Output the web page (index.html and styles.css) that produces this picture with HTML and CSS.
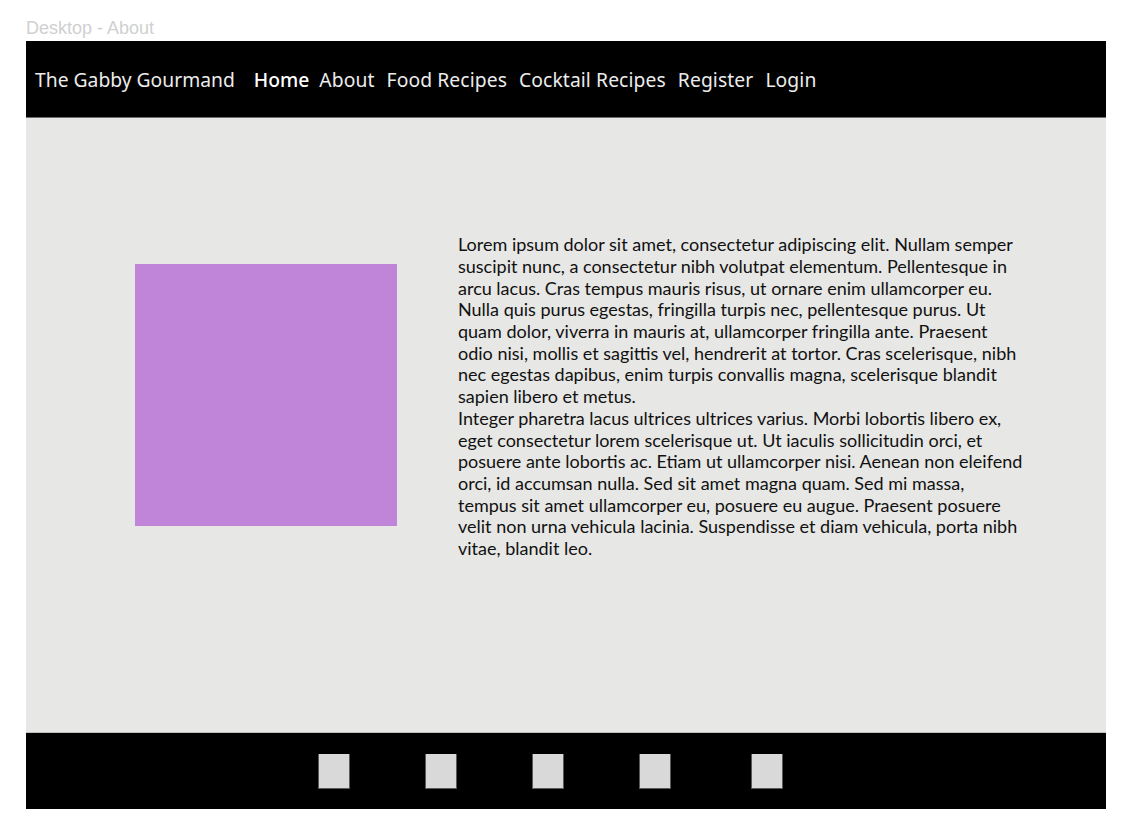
FILE: index.html
```html
<!DOCTYPE html>
<html>
<head>
<meta charset="utf-8">
<link rel="stylesheet" href="styles.css">
</head>
<body>
<div class="label">Desktop - About</div>
<div class="frame">
  <header class="header">
    <span class="brand">The Gabby Gourmand</span>
    <nav class="nav">
      <a class="active">Home</a>
      <a>About</a>
      <a>Food Recipes</a>
      <a>Cocktail Recipes</a>
      <a>Register</a>
      <a>Login</a>
    </nav>
  </header>
  <main class="main">
    <div class="photo"></div>
    <div class="text">
      <p>Lorem ipsum dolor sit amet, consectetur adipiscing elit. Nullam semper suscipit nunc, a consectetur nibh volutpat elementum. Pellentesque in arcu lacus. Cras tempus mauris risus, ut ornare enim ullamcorper eu. Nulla quis purus egestas, fringilla turpis nec, pellentesque purus. Ut quam dolor, viverra in mauris at, ullamcorper fringilla ante. Praesent odio nisi, mollis et sagittis vel, hendrerit at tortor. Cras scelerisque, nibh nec egestas dapibus, enim turpis convallis magna, scelerisque blandit sapien libero et metus.</p>
      <p>Integer pharetra lacus ultrices ultrices varius. Morbi lobortis libero ex, eget consectetur lorem scelerisque ut. Ut iaculis sollicitudin orci, et posuere ante lobortis ac. Etiam ut ullamcorper nisi. Aenean non eleifend orci, id accumsan nulla. Sed sit amet magna quam. Sed mi massa, tempus sit amet ullamcorper eu, posuere eu augue. Praesent posuere velit non urna vehicula lacinia. Suspendisse et diam vehicula, porta nibh vitae, blandit leo.</p>
    </div>
  </main>
  <footer class="footer">
    <span class="sq"></span>
    <span class="sq"></span>
    <span class="sq"></span>
    <span class="sq"></span>
    <span class="sq last"></span>
  </footer>
</div>
</body>
</html>
```
FILE: styles.css
```css
html, body { margin: 0; padding: 0; background: #ffffff; }
body { padding: 18px 40px 25px 26px; }
.label {
  font-family: "Liberation Sans", Arial, sans-serif;
  font-size: 18px;
  color: #d0d0d0;
  line-height: 20px;
  height: 23px;
}
.frame { width: 1080px; display: flex; flex-direction: column; }
.header {
  height: 76px;
  background: #000;
  border-bottom: 1px solid #6e6e6e;
  display: flex;
  align-items: center;
  padding-left: 9px;
  font-family: "Noto Sans", "Open Sans", sans-serif;
  font-size: 19.3px;
  color: #ececec;
}
.brand { margin-right: 19px; }
.nav { display: flex; gap: 12px; }
.nav a { color: #ececec; letter-spacing: 0.1px; }
.nav a.active { color: #ffffff; font-weight: 500; letter-spacing: 0; margin-right: -2px; }
.main {
  height: 614px;
  box-sizing: border-box;
  background: #e7e7e5;
  display: flex;
  align-items: center;
  padding-left: 109px;
  padding-bottom: 60px;
}
.photo { width: 262px; height: 262px; background: #c084d9; flex: none; }
.text {
  margin-left: 61px;
  margin-top: 4px;
  width: 567px;
  font-family: Lato, "Liberation Sans", sans-serif;
  font-size: 18px;
  line-height: 21.7px;
  color: #111;
}
.text p { margin: 0; }
.footer {
  height: 76px;
  background: #000;
  border-top: 1px solid #bdbdbd;
  display: flex;
  align-items: center;
  padding-left: 292px;
  gap: 75px;
}
.sq {
  width: 30px; height: 34px;
  background: #d9d9d9;
  border: 1px solid #5a5a5a;
  border-top: none;
}
.sq.last { margin-left: 5px; }
```
